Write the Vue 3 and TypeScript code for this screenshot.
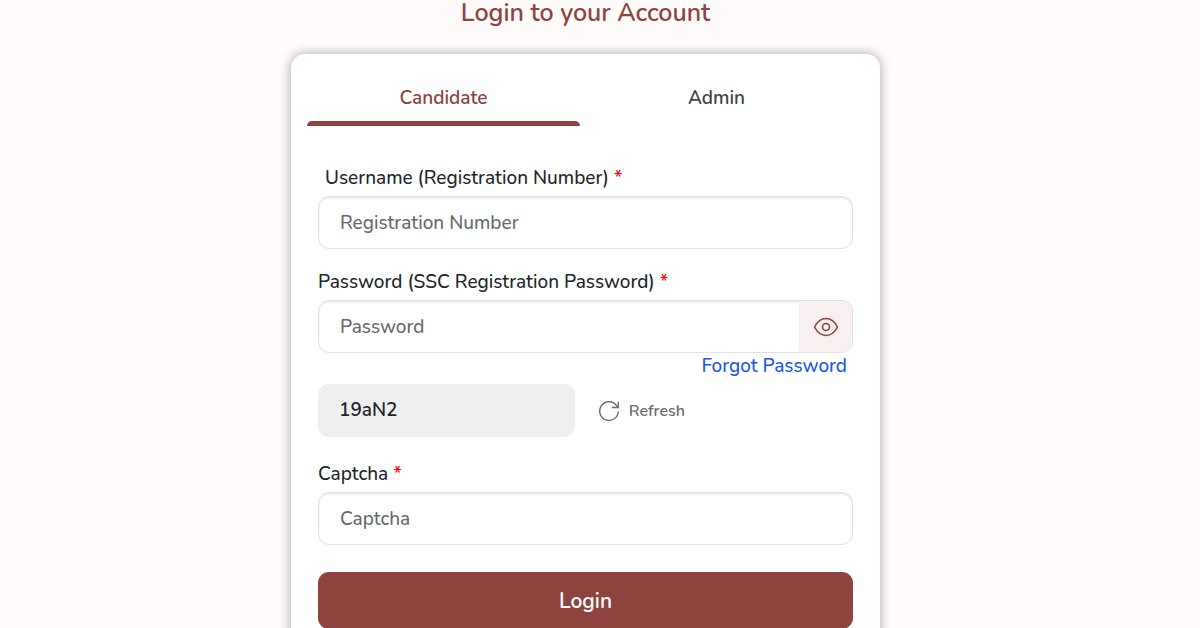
<script setup lang="ts">
import { ref } from 'vue'

type Tab = 'Candidate' | 'Admin'

const tabs: Tab[] = ['Candidate', 'Admin']
const activeTab = ref<Tab>('Candidate')
const username = ref('')
const password = ref('')
const captcha = ref('')
const captchaCode = ref('19aN2')
const showPassword = ref(false)

function refreshCaptcha(): void {
  const pool = 'ABCDEFGHJKLMNPQRSTUVWXYZabcdefghjkmnpqrstuvwxyz123456789'
  captchaCode.value = Array.from({ length: 5 }, () => pool[Math.floor(Math.random() * pool.length)]).join('')
}
</script>

<template>
  <main class="page">
    <h1 class="title">Login to your Account</h1>
    <section class="card">
      <div class="tabs" role="tablist">
        <button
          v-for="tab in tabs"
          :key="tab"
          type="button"
          role="tab"
          class="tab"
          :class="{ active: tab === activeTab }"
          :aria-selected="tab === activeTab"
          @click="activeTab = tab"
        >
          {{ tab }}
        </button>
      </div>

      <form class="form" @submit.prevent>
        <div class="field">
          <label class="label indented" for="username">Username (Registration Number) <span class="star">*</span></label>
          <input id="username" v-model="username" class="control" type="text" placeholder="Registration Number" />
        </div>

        <div class="field">
          <label class="label" for="password">Password (SSC Registration Password) <span class="star">*</span></label>
          <div class="control group">
            <input
              id="password"
              v-model="password"
              class="bare"
              :type="showPassword ? 'text' : 'password'"
              placeholder="Password"
            />
            <button type="button" class="eye" aria-label="Show password" @click="showPassword = !showPassword">
              <svg width="26" height="22" viewBox="0 0 26 22" fill="none" stroke="currentColor" stroke-width="1.6">
                <path d="M1.500 11C4.500 5.200 8.500 2.500 13 2.500S21.500 5.200 24.500 11C21.500 16.800 17.500 19.500 13 19.500S4.500 16.800 1.500 11Z" stroke-linejoin="round" />
                <circle cx="13" cy="11" r="3.500" />
              </svg>
            </button>
          </div>
          <a class="forgot" href="#">Forgot Password</a>
        </div>

        <div class="captcha-row">
          <output class="code">{{ captchaCode }}</output>
          <button type="button" class="refresh" @click="refreshCaptcha">
            <svg width="22" height="22" viewBox="0 0 22 22" fill="none" stroke="currentColor" stroke-width="1.4">
              <path d="M20.300 11.500A9.300 9.300 0 1 1 18.300 5.300L20 7.300" />
              <path d="M20.300 1.800V7.500H14" />
            </svg>
            Refresh
          </button>
        </div>

        <div class="field">
          <label class="label" for="captcha">Captcha <span class="star">*</span></label>
          <input id="captcha" v-model="captcha" class="control" type="text" placeholder="Captcha" />
        </div>

        <button type="submit" class="login">Login</button>
      </form>
    </section>
  </main>
</template>

<style>
body {
  margin: 0;
  background: #fffbfb;
}
</style>

<style scoped>
.page {
  box-sizing: border-box;
  height: 100vh;
  overflow: hidden;
  padding-right: 29px;
  background: #fffbfb;
  color: #212529;
  font-family: Nunito, "Noto Sans", sans-serif;
  font-size: 19px;
}

button,
input {
  margin: 0;
  font: inherit;
}

button {
  border: 0;
  cursor: pointer;
}

.title {
  margin: 0 0 28px;
  color: #8e433f;
  font-size: 25px;
  font-weight: 600;
  line-height: 26px;
  text-align: center;
}

.card {
  box-sizing: border-box;
  width: 100%;
  max-width: 589px;
  margin: 0 auto;
  padding: 16px 27px 48px;
  border-radius: 14px;
  background: #fff;
  box-shadow: 0 0 12px rgba(0, 0, 0, 0.35);
}

.tabs {
  display: flex;
  margin-left: -11px;
}

.tab {
  position: relative;
  flex: 1;
  height: 56px;
  padding: 0;
  background: transparent;
  color: #444;
  font-weight: 600;
}

.tab.active {
  color: #8e433f;
}

.tab.active::after {
  content: "";
  position: absolute;
  right: 0;
  bottom: 0;
  left: 0;
  height: 5px;
  border-radius: 5px 5px 0 0;
  background: #8e433f;
}

.form {
  display: flex;
  flex-direction: column;
  padding-top: 38px;
}

.field {
  display: flex;
  flex-direction: column;
}

.field + .field {
  margin-top: 19px;
}

.label {
  height: 32px;
  font-weight: 500;
  line-height: 28px;
}

.indented {
  padding-left: 7px;
}

.star {
  color: #f00;
}

.control {
  box-sizing: border-box;
  width: 100%;
  height: 53px;
  padding: 0 21px;
  border: 1px solid #dee2e6;
  border-radius: 11px;
  background: #fff;
  box-shadow: inset 0 1px 2px rgba(0, 0, 0, 0.1);
  color: #212529;
  font-weight: 500;
}

.group {
  display: flex;
  overflow: hidden;
  padding: 0;
}

.bare {
  flex: 1;
  min-width: 0;
  padding: 0 21px;
  border: 0;
  background: transparent;
  color: #212529;
}

.control::placeholder,
.bare::placeholder {
  color: #666a6e;
  opacity: 1;
}

.eye {
  display: flex;
  flex: 0 0 53px;
  align-items: center;
  justify-content: center;
  padding: 0;
  background: #f8eff0;
  color: #8e433f;
}

.forgot {
  align-self: flex-end;
  margin-right: 6px;
  color: #1a56e8;
  font-weight: 500;
  line-height: 26px;
  text-decoration: none;
}

.captcha-row {
  display: flex;
  align-items: center;
  gap: 23px;
  margin: 5px 0 23px;
}

.code {
  box-sizing: border-box;
  flex: 0 0 48%;
  padding: 0 21px;
  border-radius: 11px;
  background: #efefef;
  font-weight: 600;
  line-height: 53px;
}

.refresh {
  display: flex;
  align-items: center;
  gap: 9px;
  padding: 0;
  background: transparent;
  color: #6c6c6c;
  font-size: 16px;
  font-weight: 600;
}

.login {
  height: 57px;
  margin-top: 27px;
  padding: 0;
  border-radius: 11px;
  background: #8e433f;
  color: #fff;
  font-size: 21px;
  font-weight: 600;
}
</style>
